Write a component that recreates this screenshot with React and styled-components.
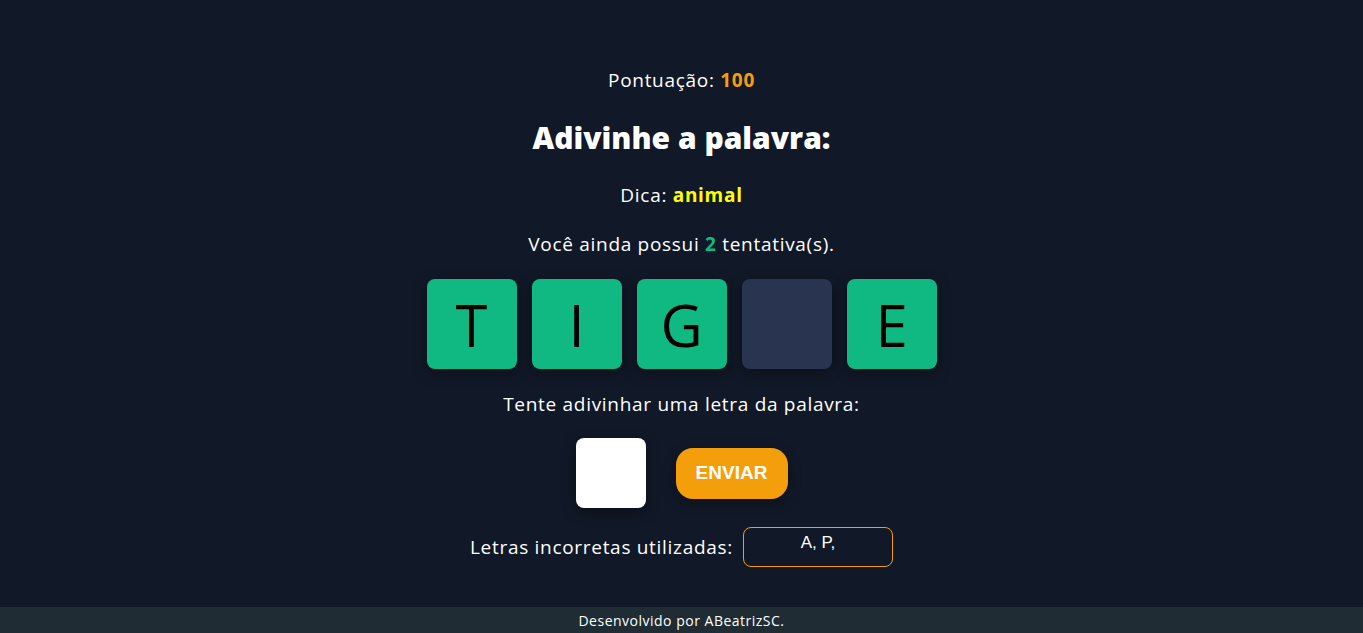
import React from 'react'
import styled, { createGlobalStyle } from 'styled-components';

const GlobalStyle = createGlobalStyle`
body {
    margin: 0;
    background-color: #111827;
    font-family: "Open Sans", "Noto Sans", sans-serif;
    color: #ffffff;
}
`

const Page = styled.div`
min-height: 100vh;
display: flex;
flex-direction: column;
`

const Main = styled.main`
flex: 1;
display: flex;
flex-direction: column;
align-items: center;
padding-top: 67px;
gap: 22px;
`

const Line = styled.p`
margin: 0;
font-size: 19px;
line-height: 27px;
letter-spacing: 0.7px;
text-align: center;
`

const Highlight = styled.span`
color: ${props => props.color};
font-weight: 700;
`

const Title = styled.h1`
margin: 0;
font-size: 30px;
line-height: 44px;
font-weight: 800;
`

const Tiles = styled.div`
display: flex;
gap: 15px;
margin-top: -1px;
`

const Tile = styled.div`
width: 90px;
height: 90px;
border-radius: 8px;
background-color: ${props => props.$filled ? '#10b981' : '#293550'};
color: #000000;
display: flex;
align-items: center;
justify-content: center;
font-size: 58px;
font-weight: 400;
box-shadow: 0 4px 14px rgba(0, 0, 0, 0.35);
`

const GuessRow = styled.div`
display: flex;
align-items: center;
gap: 30px;
margin-top: -2px;
`

const LetterInput = styled.input`
width: 70px;
height: 70px;
box-sizing: border-box;
border: none;
border-radius: 8px;
background: #ffffff;
box-shadow: 0 4px 14px rgba(0, 0, 0, 0.4);
outline: none;
`

const SendButton = styled.button`
width: 112px;
height: 51px;
border: none;
border-radius: 17px;
background-color: #f59e0b;
color: #ffffff;
font-family: "Liberation Sans", Arial, sans-serif;
font-weight: 700;
font-size: 19px;
box-shadow: 0 4px 14px rgba(0, 0, 0, 0.3);
cursor: pointer;
`

const WrongRow = styled.div`
display: flex;
align-items: center;
gap: 10px;
margin-top: -3px;
`

const WrongBox = styled.div`
width: 150px;
height: 40px;
box-sizing: border-box;
border: 1px solid #f59e0b;
border-radius: 8px;
padding-top: 5px;
text-align: center;
font-family: "Liberation Sans", Arial, sans-serif;
font-size: 17px;
`

const Footer = styled.footer`
height: 26px;
background-color: #202c33;
display: flex;
align-items: center;
justify-content: center;
font-size: 14px;
letter-spacing: 0.5px;
`

const word = ['T', 'I', 'G', '', 'E'];

const App = () => {
    return (
        <Page>
            <GlobalStyle />
            <Main>
                <Line>Pontuação: <Highlight color="#f59e0b">100</Highlight></Line>
                <Title>Adivinhe a palavra:</Title>
                <Line>Dica: <Highlight color="#ffff00">animal</Highlight></Line>
                <Line>Você ainda possui <Highlight color="#10b981">2</Highlight> tentativa(s).</Line>
                <Tiles>
                    {word.map((l, i) => (
                        <Tile key={i} $filled={l !== ''}>{l}</Tile>
                    ))}
                </Tiles>
                <Line>Tente adivinhar uma letra da palavra:</Line>
                <GuessRow>
                    <LetterInput maxLength={1} />
                    <SendButton>ENVIAR</SendButton>
                </GuessRow>
                <WrongRow>
                    <Line>Letras incorretas utilizadas:</Line>
                    <WrongBox>A, P,</WrongBox>
                </WrongRow>
            </Main>
            <Footer>Desenvolvido por ABeatrizSC.</Footer>
        </Page>
    );
};

export default App
